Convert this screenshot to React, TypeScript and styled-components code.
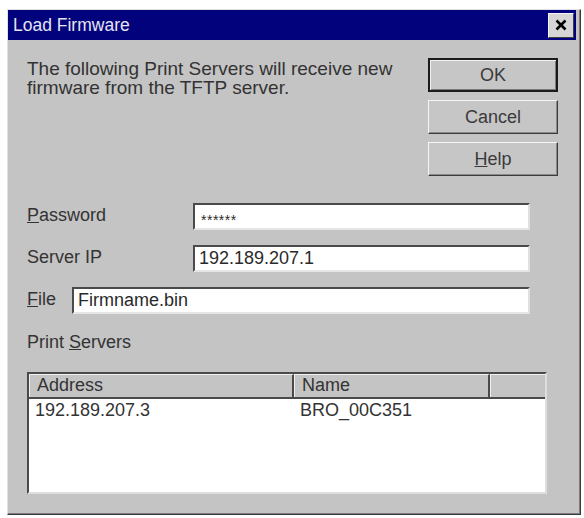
import styled, { createGlobalStyle } from "styled-components";

const GlobalStyle = createGlobalStyle`
  body {
    margin: 0;
    background: #ffffff;
    font-family: "Liberation Sans", Arial, sans-serif;
    color: #2e2e2e;
  }
`;

// 리스트에 들어가는 프린트 서버 목록
const servers = [{ address: "192.189.207.3", name: "BRO_00C351" }];

const App = () => {
  return (
    <>
      <GlobalStyle />
      <Dialog>
        <TitleBar>
          <TitleText>Load Firmware</TitleText>
          <CloseButton aria-label="Close">
            <svg width="12" height="12" viewBox="0 0 12 12">
              <path d="M1.5 1.5 L10.5 10.5 M10.5 1.5 L1.5 10.5" stroke="#000" strokeWidth="2.6" />
            </svg>
          </CloseButton>
        </TitleBar>

        <Body>
          <TopRow>
            <Message>
              The following Print Servers will receive new
              <br />
              firmware from the TFTP server.
            </Message>
            <ButtonColumn>
              <Button $default>OK</Button>
              <Button>Cancel</Button>
              <Button>
                <u>H</u>elp
              </Button>
            </ButtonColumn>
          </TopRow>

          <Form>
            <FieldRow>
              <Label $width={166}>
                <u>P</u>assword
              </Label>
              <Field>
                <Masked>******</Masked>
              </Field>
            </FieldRow>
            <FieldRow>
              <Label $width={166}>Server IP</Label>
              <Field>192.189.207.1</Field>
            </FieldRow>
            <FieldRow>
              <Label $width={45}>
                <u>F</u>ile
              </Label>
              <Field>Firmname.bin</Field>
            </FieldRow>
          </Form>

          <SectionLabel>
            Print <u>S</u>ervers
          </SectionLabel>

          <ListBox>
            <HeaderRow>
              <HeaderCell $width={265}>Address</HeaderCell>
              <HeaderCell $width={196}>Name</HeaderCell>
              <HeaderCell $width={0} $grow />
            </HeaderRow>
            {servers.map((s) => (
              <ListRow key={s.address}>
                <ListCell $width={265}>{s.address}</ListCell>
                <ListCell $width={196}>{s.name}</ListCell>
              </ListRow>
            ))}
          </ListBox>
        </Body>
      </Dialog>
    </>
  );
};

const Dialog = styled.div`
  box-sizing: border-box;
  margin: 9px 0 0 7px;
  width: 574px;
  height: 506px;
  background: #c4c4c4;
  border: 1px solid;
  border-color: #e2e2e2 #3a3a3a #3a3a3a #e2e2e2;
  box-shadow: inset -1px -1px 0 #7c7c7c;
`;

const TitleBar = styled.div`
  display: flex;
  justify-content: space-between;
  align-items: center;
  height: 30px;
  margin-right: 4px;
  padding: 0 2px 0 5px;
  background: #02037c;
`;

const TitleText = styled.span`
  font-size: 17.5px;
  color: #e4e4f2;
`;

const CloseButton = styled.div`
  box-sizing: border-box;
  display: flex;
  align-items: center;
  justify-content: center;
  width: 26px;
  height: 25px;
  background: #d6d6d6;
  border: 1px solid;
  border-color: #f4f4f4 #404040 #404040 #f4f4f4;
`;

const Body = styled.div`
  padding: 18px 22px 0 19px;
`;

const TopRow = styled.div`
  display: flex;
  justify-content: space-between;
  align-items: flex-start;
`;

const Message = styled.p`
  margin: 1px 0 0;
  font-size: 19px;
  line-height: 19px;
  color: #333;
`;

const ButtonColumn = styled.div`
  display: flex;
  flex-direction: column;
  gap: 8px;
  width: 130px;
`;

const Button = styled.div<{ $default?: boolean }>`
  box-sizing: border-box;
  display: flex;
  align-items: center;
  justify-content: center;
  height: 34px;
  font-size: 18px;
  color: #3a3a3a;
  background: #c6c6c6;
  border: 1px solid;
  border-color: #f6f6f6 #3c3c3c #3c3c3c #f6f6f6;
  box-shadow: inset -1px -1px 0 #8a8a8a;
  ${(p) =>
    p.$default &&
    `
    border: 2px solid #1a1a1a;
    box-shadow: inset 1px 1px 0 #f2f2f2, inset -1px -1px 0 #7a7a7a;
  `}
`;

const Form = styled.div`
  display: flex;
  flex-direction: column;
  gap: 15px;
  margin-top: 27px;
`;

const FieldRow = styled.div`
  display: flex;
  align-items: center;
  width: 503px;
  height: 27px;
`;

const Label = styled.span<{ $width: number }>`
  flex: 0 0 ${(p) => p.$width}px;
  font-size: 18px;
  margin-top: -2px;
  color: #333;
`;

const Field = styled.div`
  box-sizing: border-box;
  flex: 1;
  height: 27px;
  display: flex;
  align-items: center;
  padding: 0 4px;
  background: #ffffff;
  font-size: 18px;
  color: #2a2a2a;
  border-top: 2px solid #4a4a4a;
  border-left: 2px solid #4a4a4a;
  border-right: 2px solid #e0e0e0;
  border-bottom: 2px solid #e6e6e6;
`;

const Masked = styled.span`
  font-size: 14px;
  letter-spacing: 0.5px;
  margin-top: 6px;
  padding-left: 2px;
`;

const SectionLabel = styled.div`
  margin-top: 18px;
  font-size: 18px;
  line-height: 20px;
  color: #333;
`;

const ListBox = styled.div`
  box-sizing: border-box;
  margin-top: 20px;
  width: 520px;
  height: 122px;
  background: #ffffff;
  border-top: 2px solid #4a4a4a;
  border-left: 2px solid #4a4a4a;
  border-right: 2px solid #dedede;
  border-bottom: 2px solid #dedede;
`;

const HeaderRow = styled.div`
  display: flex;
  height: 23px;
  background: #c4c4c4;
  border-bottom: 2px solid #4a4a4a;
`;

const HeaderCell = styled.div<{ $width: number; $grow?: boolean }>`
  box-sizing: border-box;
  flex: ${(p) => (p.$grow ? "1" : `0 0 ${p.$width}px`)};
  display: flex;
  align-items: flex-end;
  padding: 0 0 1px 7px;
  font-size: 18px;
  color: #333;
  border-top: 1px solid #f0f0f0;
  border-left: 1px solid #f0f0f0;
  border-right: ${(p) => (p.$grow ? "none" : "2px solid #4a4a4a")};
`;

const ListRow = styled.div`
  display: flex;
  height: 22px;
  align-items: center;
`;

const ListCell = styled.div<{ $width: number }>`
  flex: 0 0 ${(p) => p.$width}px;
  padding-left: 6px;
  box-sizing: border-box;
  font-size: 18px;
  color: #333;
`;

export default App;
